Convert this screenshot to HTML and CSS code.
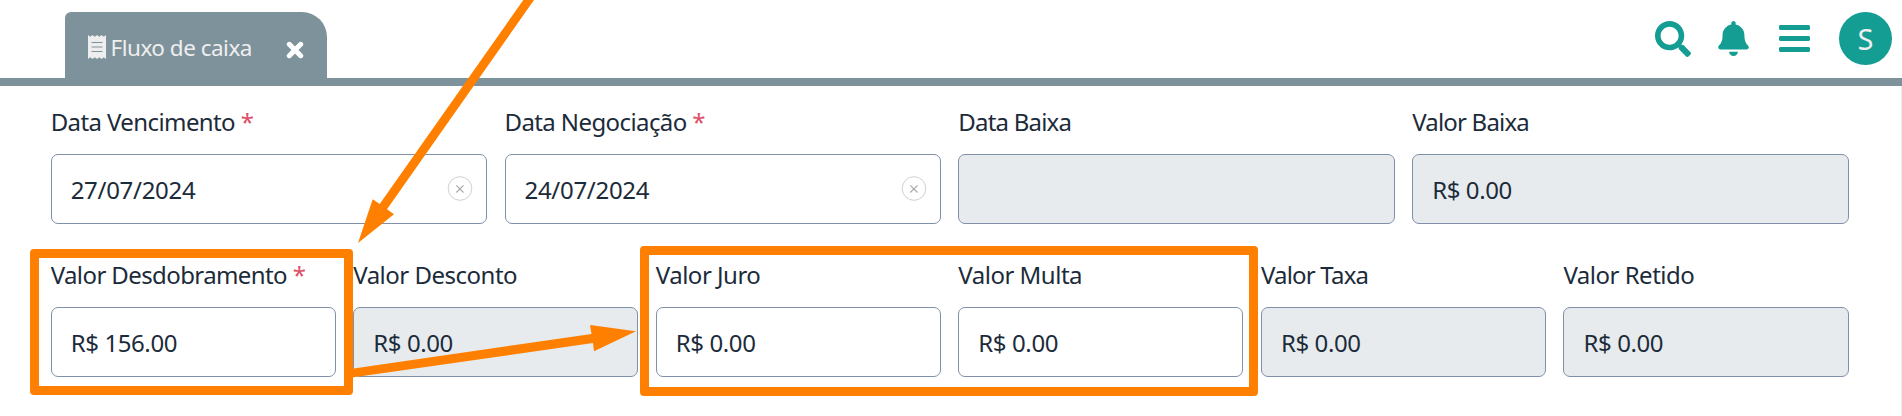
FILE: index.html
```
<!DOCTYPE html>
<html lang="pt-BR">
<head>
<meta charset="utf-8">
<title>Fluxo de caixa</title>
<link rel="stylesheet" href="styles.css">
</head>
<body>
<header class="topbar">
  <div class="tab">
    <svg class="receipt" viewBox="0 0 18 24"><path fill="#eee" d="M0 0 2.2 1.7 4.5 0 6.7 1.7 9 0l2.3 1.7L13.5 0l2.3 1.7L18 0v24l-2.2-1.7-2.3 1.7-2.2-1.7L9 24l-2.3-1.7L4.5 24l-2.3-1.7L0 24z"/><path stroke="#7e929b" stroke-width="1.1" d="M3.5 7.5h11M3.5 12h11M3.5 16.500h11"/></svg>
    <span class="tab-title">Fluxo de caixa</span>
    <svg class="close" viewBox="0 0 18 18"><path d="M3.300 3.300l11.400 11.400M14.700 3.300L3.300 14.700" stroke="#fff" stroke-width="5" stroke-linecap="round"/></svg>
  </div>
  <nav class="actions">
    <svg class="search" viewBox="0 0 512 512"><path d="M505 442.700 405.300 343c-4.500-4.500-10.600-7-17-7H372c27.600-35.300 44-79.700 44-128C416 93.100 322.900 0 208 0S0 93.100 0 208s93.100 208 208 208c48.300 0 92.700-16.400 128-44v16.300c0 6.400 2.500 12.500 7 17l99.700 99.700c9.400 9.400 24.600 9.400 33.900 0l28.300-28.300c9.400-9.400 9.400-24.600.1-34zM208 336c-70.700 0-128-57.200-128-128 0-70.700 57.200-128 128-128 70.700 0 128 57.200 128 128 0 70.700-57.200 128-128 128z"/></svg>
    <svg class="bell" viewBox="0 0 448 512"><path d="M224 512c35.320 0 63.970-28.650 63.970-64H160.030c0 35.350 28.650 64 63.970 64zm215.390-149.710c-19.320-20.760-55.470-51.990-55.470-154.290 0-77.700-54.480-139.900-127.940-155.160V32c0-17.670-14.320-32-31.980-32s-31.980 14.330-31.980 32v20.840C118.560 68.100 64.080 130.300 64.080 208c0 102.300-36.150 133.530-55.470 154.290-6 6.450-8.660 14.160-8.610 21.710.11 16.400 12.980 32 32.100 32h383.800c19.120 0 32-15.600 32.100-32 .05-7.550-2.610-15.270-8.610-21.710z"/></svg>
    <svg class="menu" viewBox="0 0 31 27"><path d="M1 0h29l1 1v3l-1 1H1L0 4V1zM1 11h29l1 1v3l-1 1H1l-1-1v-3zM1 22h29l1 1v3l-1 1H1l-1-1v-3z"/></svg>
    <div class="avatar">S</div>
  </nav>
</header>
<main class="form">
  <div class="row four">
    <div class="field"><label class="snug">Data Vencimento <b>*</b></label><div class="input date">27/07/2024<svg class="clear" viewBox="0 0 26 26"><circle cx="13" cy="12.500" r="11.800"/><path d="M9.300 9.300l7.200 7.200M16.500 9.300l-7.200 7.200"/></svg></div></div>
    <div class="field"><label class="snug">Data Negociação <b>*</b></label><div class="input date">24/07/2024<svg class="clear" viewBox="0 0 26 26"><circle cx="13" cy="12.500" r="11.800"/><path d="M9.300 9.300l7.200 7.200M16.500 9.300l-7.200 7.200"/></svg></div></div>
    <div class="field"><label class="tight">Data Baixa</label><div class="input disabled"></div></div>
    <div class="field"><label class="tight">Valor Baixa</label><div class="input disabled">R$ 0.00</div></div>
  </div>
  <div class="row six">
    <div class="field"><label class="snug">Valor Desdobramento <b>*</b></label><div class="input">R$ 156.00</div></div>
    <div class="field"><label>Valor Desconto</label><div class="input disabled">R$ 0.00</div></div>
    <div class="field"><label>Valor Juro</label><div class="input">R$ 0.00</div></div>
    <div class="field"><label>Valor Multa</label><div class="input">R$ 0.00</div></div>
    <div class="field"><label class="tight">Valor Taxa</label><div class="input disabled">R$ 0.00</div></div>
    <div class="field"><label>Valor Retido</label><div class="input disabled">R$ 0.00</div></div>
  </div>
</main>
<svg class="annotations" viewBox="0 0 1902 416">
  <path d="M523.300 0h10.700L387 209.300l7 5L358 243l14.700-43.700 7 4.700z"/>
  <path d="M352 368.700 591.500 334l-1.500-9 46 6.300-42 20-1-8.300L352 377.500z"/>
  <path fill-rule="evenodd" d="M34 249h315q4 0 4 4v138q0 4-4 4H34q-4 0-4-4V253q0-4 4-4zM39 258v128h305V258z"/>
  <path fill-rule="evenodd" d="M644 246h610q4 0 4 4v142q0 4-4 4H644q-4 0-4-4V250q0-4 4-4zM649 255v132h600V255z"/>
</svg>
</body>
</html>
```
FILE: styles.css
```
* { box-sizing: border-box; }
body {
  margin: 0;
  width: 1902px;
  height: 416px;
  overflow: hidden;
  position: relative;
  background: #fff;
  color: #1c2b3a;
  font-family: "Noto Sans", "Open Sans", sans-serif;
  font-size: 24px;
}
svg { display: block; flex: none; }
.topbar {
  height: 86px;
  padding: 12px 10px 0 65px;
  border-bottom: 8px solid #7e929b;
  display: flex;
  justify-content: space-between;
  align-items: flex-start;
}
.tab {
  width: 262px;
  height: 66px;
  padding: 0 23px 0 22.500px;
  display: flex;
  align-items: center;
  background: #7e929b;
  border-radius: 6px 25px 0 0;
  color: #eee;
}
.receipt { width: 18px; height: 24px; margin-top: 4px; }
.tab-title {
  margin-left: 5px;
  font-size: 22.500px;
  line-height: 32px;
  letter-spacing: -0.500px;
  white-space: nowrap;
  padding-top: 5px;
}
.close { width: 18px; height: 18px; margin-left: auto; margin-top: 10px; }
.actions { display: flex; align-items: flex-start; fill: #149d93; }
.search { width: 36px; height: 36px; margin-top: 9px; }
.bell { width: 31px; height: 35px; margin: 9px 0 0 27px; }
.menu { width: 31px; height: 27px; margin: 13px 0 0 30px; }
.avatar {
  width: 53px;
  height: 53px;
  margin-left: 29px;
  border-radius: 50%;
  background: #149d93;
  color: #eee;
  font-size: 29px;
  line-height: 54px;
  text-align: center;
}
.form {
  height: 330px;
  padding: 19px 52.500px 0 50.700px;
  border-right: 1px solid #e9ebee;
  display: flex;
  flex-direction: column;
  gap: 15px;
}
.row { display: grid; column-gap: 17.500px; }
.four { grid-template-columns: repeat(4, 1fr); }
.six { grid-template-columns: repeat(6, 1fr); }
.field { display: flex; flex-direction: column; height: 138px; min-width: 0; }
label { height: 49px; line-height: 34px; white-space: nowrap; letter-spacing: -0.500px; }
label.snug { letter-spacing: -0.600px; }
label.tight { letter-spacing: -0.800px; }
label b { color: #e04f68; font-weight: 400; }
.input {
  height: 70px;
  padding: 0 13px 0 19px;
  border: 1px solid #8090a8;
  border-radius: 7px;
  display: flex;
  align-items: center;
  justify-content: space-between;
  letter-spacing: -0.400px;
}
.input.date { letter-spacing: -0.300px; }
.disabled { background: #e7ebee; }
.clear { width: 26px; height: 26px; fill: none; stroke: #d0d0d0; }
.clear path { stroke: #aaa; stroke-width: 1.200; }
.annotations { position: absolute; left: 0; top: 0; width: 1902px; height: 416px; fill: #ff8000; }
```
